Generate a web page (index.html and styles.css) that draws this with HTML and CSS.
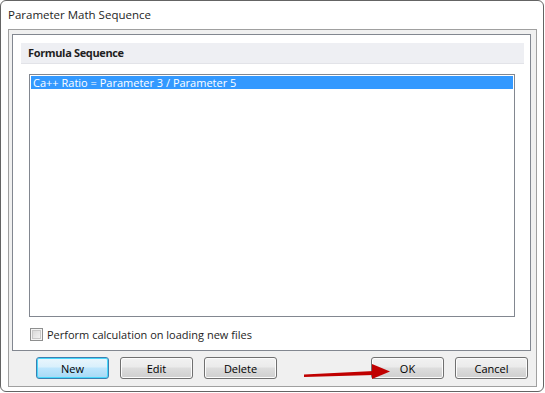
FILE: index.html
```html
<!DOCTYPE html>
<html>
<head>
    <title>Parameter Math Sequence</title>
    <link rel="stylesheet" href="styles.css">
</head>
<body>
    <div class="window">
        <div class="title-bar">Parameter Math Sequence</div>
        <div class="frame">
            <div class="panel">
                <div class="panel-header">Formula Sequence</div>
                <div class="list-box">
                    <div class="list-item selected">Ca++ Ratio = Parameter 3 / Parameter 5</div>
                </div>
                <label class="check-row">
                    <span class="check-box"></span>
                    <span>Perform calculation on loading new files</span>
                </label>
            </div>
            <div class="button-row">
                <button class="btn default">New</button>
                <button class="btn">Edit</button>
                <button class="btn">Delete</button>
                <div class="spacer"></div>
                <button class="btn">OK</button>
                <button class="btn">Cancel</button>
            </div>
            <svg class="arrow" width="100" height="20" viewBox="0 0 100 20">
                <path d="M2 13.5 L72 10 L72 14 L2 16 Z" fill="#c00000"/>
                <path d="M70 3 L88 10.5 L70 18 Z" fill="#c00000"/>
            </svg>
        </div>
    </div>
</body>
</html>
```

FILE: styles.css
```css
* {
    margin: 0;
    padding: 0;
    box-sizing: border-box;
}

body {
    background: #ffffff;
    font-family: 'Open Sans', 'Noto Sans', sans-serif;
    font-size: 11px;
    color: #000;
}

.window {
    width: 544px;
    height: 392px;
    border: 1px solid #646464;
    border-radius: 6px;
    background: #ffffff;
    display: flex;
    flex-direction: column;
}

.title-bar {
    height: 28px;
    padding: 6px 0 0 7px;
    font-size: 11.5px;
    line-height: 16px;
    color: #1e1e1e;
}

.frame {
    position: relative;
    margin: 0 6px 4px 7px;
    border: 1px solid #a0a0a0;
    background: #f0f0f0;
    padding: 4px 5px 0 3px;
    flex: 1;
    display: flex;
    flex-direction: column;
}

.panel {
    height: 317px;
    background: #ffffff;
    border: 1px solid #828790;
    padding: 8px 6px 0 8px;
    display: flex;
    flex-direction: column;
}

.panel-header {
    height: 21px;
    background: #eeeff3;
    border-bottom: 1px solid #e2e3e8;
    padding: 2px 0 0 7px;
    font-weight: bold;
    letter-spacing: -0.35px;
    line-height: 16px;
    color: #1e1e1e;
}

.list-box {
    margin: 10px 9px 0 8px;
    height: 243px;
    border: 1px solid #828790;
    padding: 1px;
}

.list-item {
    height: 13px;
    line-height: 13px;
    padding-left: 2px;
    white-space: nowrap;
}

.list-item.selected {
    background: #3399ff;
    color: #ffffff;
}

.check-row {
    display: flex;
    align-items: center;
    gap: 4px;
    margin: 10px 0 0 9px;
    height: 14px;
    color: #1e1e1e;
}

.check-box {
    width: 13px;
    height: 13px;
    border: 1px solid #8e8f8f;
    background: linear-gradient(135deg, #d4d4d4, #f8f8f8);
    box-shadow: inset 0 0 0 1px #f4f4f4, inset 0 0 0 2px #c8c8c8;
}

.button-row {
    display: flex;
    gap: 11px;
    padding: 6px 3px 0 24px;
}

.spacer {
    flex: 1;
}

.btn {
    width: 73px;
    height: 22px;
    border: 1px solid #707070;
    border-radius: 3px;
    background: linear-gradient(#f2f2f2 0%, #ebebeb 45%, #dddddd 50%, #cfcfcf 100%);
    box-shadow: inset 0 0 0 1px #fcfcfc;
    font-family: 'Open Sans', 'Noto Sans', sans-serif;
    font-size: 11px;
    color: #000;
}

.btn.default {
    border-color: #3c7fb1;
    background: linear-gradient(#eaf6fd 0%, #d9f0fc 45%, #bee6fd 50%, #a7d9f5 100%);
    box-shadow: inset 0 0 0 1px #48d8fb;
}

.arrow {
    position: absolute;
    left: 293px;
    top: 331px;
}
```
